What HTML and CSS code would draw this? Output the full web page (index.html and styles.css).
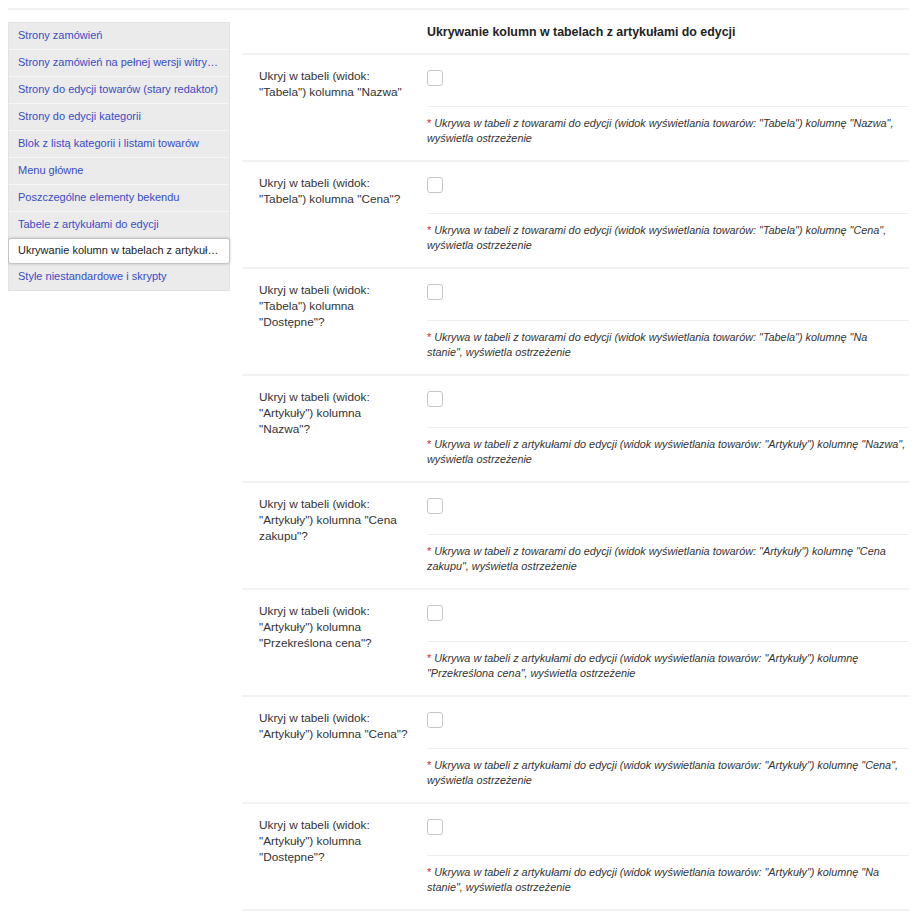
FILE: index.html
```html
<!DOCTYPE html>
<html lang="pl">
<head>
  <meta charset="UTF-8" />
  <title>Ukrywanie kolumn w tabelach z artykułami do edycji</title>
  <link rel="stylesheet" href="styles.css">
</head>
<body>
  <div class="page">
    <ul class="sidebar">
      <li><a href="#">Strony zamówień</a></li>
      <li><a href="#">Strony zamówień na pełnej wersji witryny sklepu</a></li>
      <li><a href="#">Strony do edycji towarów (stary redaktor)</a></li>
      <li><a href="#">Strony do edycji kategorii</a></li>
      <li><a href="#">Blok z listą kategorii i listami towarów</a></li>
      <li><a href="#">Menu główne</a></li>
      <li><a href="#">Poszczególne elementy bekendu</a></li>
      <li><a href="#">Tabele z artykułami do edycji</a></li>
      <li class="active"><a href="#">Ukrywanie kolumn w tabelach z artykułami do edycji</a></li>
      <li><a href="#">Style niestandardowe i skrypty</a></li>
    </ul>

    <div class="settings">
      <div class="settings-head">
        <div class="head-spacer"></div>
        <h2>Ukrywanie kolumn w tabelach z artykułami do edycji</h2>
      </div>

      <div class="row">
        <label class="row-label" for="c1">Ukryj w tabeli (widok: "Tabela") kolumna "Nazwa"</label>
        <div class="row-field">
          <div class="check-wrap"><input type="checkbox" id="c1"></div>
          <p class="hint"><span class="req">*</span> Ukrywa w tabeli z towarami do edycji (widok wyświetlania towarów: "Tabela") kolumnę "Nazwa", wyświetla ostrzeżenie</p>
        </div>
      </div>

      <div class="row">
        <label class="row-label" for="c2">Ukryj w tabeli (widok: "Tabela") kolumna "Cena"?</label>
        <div class="row-field">
          <div class="check-wrap"><input type="checkbox" id="c2"></div>
          <p class="hint"><span class="req">*</span> Ukrywa w tabeli z towarami do edycji (widok wyświetlania towarów: "Tabela") kolumnę "Cena", wyświetla ostrzeżenie</p>
        </div>
      </div>

      <div class="row">
        <label class="row-label" for="c3">Ukryj w tabeli (widok: "Tabela") kolumna "Dostępne"?</label>
        <div class="row-field">
          <div class="check-wrap"><input type="checkbox" id="c3"></div>
          <p class="hint"><span class="req">*</span> Ukrywa w tabeli z towarami do edycji (widok wyświetlania towarów: "Tabela") kolumnę "Na stanie", wyświetla ostrzeżenie</p>
        </div>
      </div>

      <div class="row">
        <label class="row-label" for="c4">Ukryj w tabeli (widok: "Artykuły") kolumna "Nazwa"?</label>
        <div class="row-field">
          <div class="check-wrap"><input type="checkbox" id="c4"></div>
          <p class="hint"><span class="req">*</span> Ukrywa w tabeli z artykułami do edycji (widok wyświetlania towarów: "Artykuły") kolumnę "Nazwa", wyświetla ostrzeżenie</p>
        </div>
      </div>

      <div class="row">
        <label class="row-label" for="c5">Ukryj w tabeli (widok: "Artykuły") kolumna "Cena zakupu"?</label>
        <div class="row-field">
          <div class="check-wrap"><input type="checkbox" id="c5"></div>
          <p class="hint"><span class="req">*</span> Ukrywa w tabeli z towarami do edycji (widok wyświetlania towarów: "Artykuły") kolumnę "Cena zakupu", wyświetla ostrzeżenie</p>
        </div>
      </div>

      <div class="row">
        <label class="row-label" for="c6">Ukryj w tabeli (widok: "Artykuły") kolumna "Przekreślona cena"?</label>
        <div class="row-field">
          <div class="check-wrap"><input type="checkbox" id="c6"></div>
          <p class="hint"><span class="req">*</span> Ukrywa w tabeli z artykułami do edycji (widok wyświetlania towarów: "Artykuły") kolumnę "Przekreślona cena", wyświetla ostrzeżenie</p>
        </div>
      </div>

      <div class="row">
        <label class="row-label" for="c7">Ukryj w tabeli (widok: "Artykuły") kolumna "Cena"?</label>
        <div class="row-field">
          <div class="check-wrap"><input type="checkbox" id="c7"></div>
          <p class="hint"><span class="req">*</span> Ukrywa w tabeli z artykułami do edycji (widok wyświetlania towarów: "Artykuły") kolumnę "Cena", wyświetla ostrzeżenie</p>
        </div>
      </div>

      <div class="row">
        <label class="row-label" for="c8">Ukryj w tabeli (widok: "Artykuły") kolumna "Dostępne"?</label>
        <div class="row-field">
          <div class="check-wrap"><input type="checkbox" id="c8"></div>
          <p class="hint"><span class="req">*</span> Ukrywa w tabeli z artykułami do edycji (widok wyświetlania towarów: "Artykuły") kolumnę "Na stanie", wyświetla ostrzeżenie</p>
        </div>
      </div>
    </div>
  </div>
</body>
</html>
```

FILE: styles.css
```css
body {
  font-family: 'Liberation Sans', Arial, sans-serif;
  font-size: 12px;
  color: #333;
  background: #fff;
  margin: 8px;
}

.page {
  display: flex;
  align-items: flex-start;
  gap: 12px;
  width: 901px;
  border-top: 2px solid #f2f2f2;
}

/* Menu boczne */
.sidebar {
  list-style: none;
  margin: 12px 0 0;
  padding: 0;
  width: 222px;
  flex-shrink: 0;
  background: #ebebeb;
  border: 1px solid #e2e2e2;
  box-sizing: border-box;
}

.sidebar li {
  border-bottom: 1px solid #f6f6f6;
}

.sidebar li:last-child {
  border-bottom: none;
}

.sidebar a {
  display: block;
  height: 26px;
  line-height: 25px;
  padding: 0 10px 0 9px;
  font-size: 11px;
  color: #3a4cc4;
  text-decoration: none;
  white-space: nowrap;
  overflow: hidden;
  text-overflow: ellipsis;
}

.sidebar li.active {
  position: relative;
  background: #fff;
  border: 1px solid #c4c4c4;
  border-radius: 3px;
  box-shadow: 0 0 3px rgba(0,0,0,0.2);
  margin: -1px -1px 0;
}

.sidebar li.active a {
  color: #222;
  height: 24px;
  line-height: 23px;
  padding-left: 9px;
}

/* Ustawienia */
.settings {
  flex: 1;
}

.settings-head {
  display: flex;
  height: 43px;
  align-items: center;
  border-bottom: 2px solid #f2f2f2;
}

.head-spacer {
  width: 185px;
  flex-shrink: 0;
}

.settings-head h2 {
  margin: 0;
  font-size: 12.4px;
  color: #222;
}

.row {
  display: flex;
  height: 105px;
  border-bottom: 2px solid #f2f2f2;
}

.row-label {
  width: 152px;
  flex-shrink: 0;
  padding: 13px 16px 0 17px;
  line-height: 16px;
  font-size: 11.8px;
  color: #333;
}

.row-field {
  flex: 1;
}

.check-wrap {
  height: 36px;
  padding-top: 15px;
  border-bottom: 1px solid #eee;
}

.check-wrap input {
  appearance: none;
  display: block;
  margin: 0;
  width: 16px;
  height: 16px;
  border: 1px solid #c6c6c6;
  border-radius: 3px;
  background: #fff;
  box-sizing: border-box;
}

.hint {
  margin: 0;
  padding: 9px 3px 0 0;
  font-size: 10.85px;
  font-style: italic;
  line-height: 15px;
  color: #333;
}

.req {
  color: #e0201b;
  font-style: normal;
}
```
